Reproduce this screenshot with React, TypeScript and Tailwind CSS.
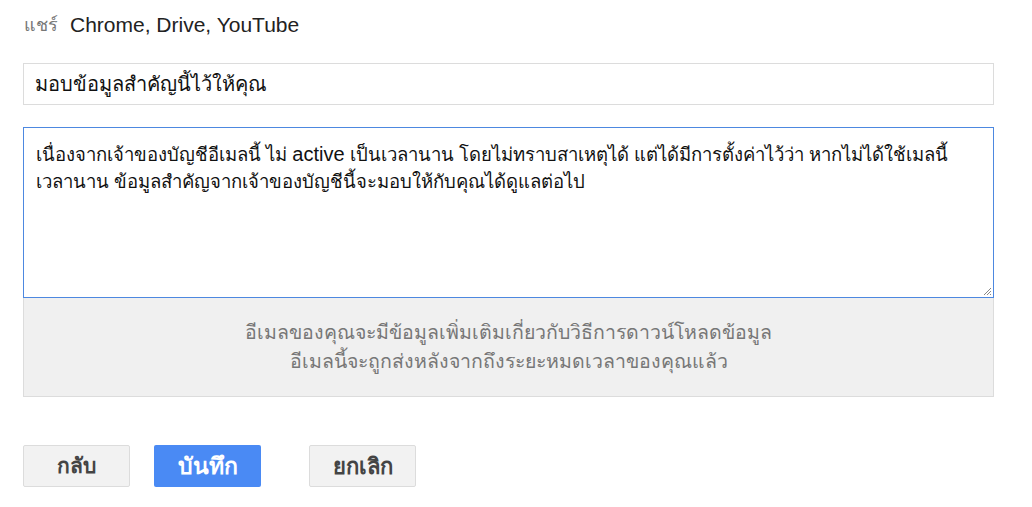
const font = { fontFamily: '"Liberation Sans", Tahoma, "Noto Sans", sans-serif' };

const App = () => {
  return (
    <div className="w-[1032px] h-[507px] bg-white pl-[23px] pr-[38px] pt-[12px]" style={font}>
      <div className="flex items-center h-[26px] pl-[1px]">
        <span className="text-[18px] text-[#777]">แชร์</span>
        <span className="ml-[12px] text-[21px] text-[#222]">Chrome, Drive, YouTube</span>
      </div>

      <div className="mt-[25px] h-[42px] border border-[#dcdcdc] flex items-center px-[11px] text-[20px] text-[#111]">
        มอบข้อมูลสำคัญนี้ไว้ให้คุณ
      </div>

      <div className="relative mt-[22px] h-[171px] border border-[#4d88e0] bg-white px-[12px] pt-[13px] text-[18.5px] leading-[27px] text-[#111]">
        <div className="whitespace-nowrap">
          เนื่องจากเจ้าของบัญชีอีเมลนี้ ไม่ <span className="text-[20px]">active</span> เป็นเวลานาน โดยไม่ทราบสาเหตุได้ แต่ได้มีการตั้งค่าไว้ว่า หากไม่ได้ใช้เมลนี้
        </div>
        <div className="whitespace-nowrap">เวลานาน ข้อมูลสำคัญจากเจ้าของบัญชีนี้จะมอบให้กับคุณได้ดูแลต่อไป</div>
        <svg className="absolute right-[1px] bottom-[1px]" width="9" height="9" viewBox="0 0 9 9">
          <path d="M8 1 L1 8 M8 4 L4 8 M8 7 L7 8" stroke="#888" strokeWidth="1" />
        </svg>
      </div>

      <div className="h-[99px] bg-[#f0f0f0] border border-t-0 border-[#dcdcdc] flex flex-col items-center justify-center text-[19.5px] leading-[29px] text-[#777]">
        <div>อีเมลของคุณจะมีข้อมูลเพิ่มเติมเกี่ยวกับวิธีการดาวน์โหลดข้อมูล</div>
        <div>อีเมลนี้จะถูกส่งหลังจากถึงระยะหมดเวลาของคุณแล้ว</div>
      </div>

      <div className="mt-[48px] flex items-center">
        <button
          type="button"
          className="w-[107px] h-[42px] rounded-[2px] border border-[#dcdcdc] bg-[#f2f2f2] text-[21px] font-bold text-[#444]"
        >
          กลับ
        </button>
        <button
          type="button"
          className="ml-[24px] w-[107px] h-[42px] rounded-[2px] bg-[#4a8af4] text-[23px] font-bold text-white"
        >
          บันทึก
        </button>
        <button
          type="button"
          className="ml-[48px] w-[107px] h-[42px] rounded-[2px] border border-[#dcdcdc] bg-[#f2f2f2] text-[22px] font-bold text-[#444]"
        >
          ยกเลิก
        </button>
      </div>
    </div>
  );
};

export default App;
